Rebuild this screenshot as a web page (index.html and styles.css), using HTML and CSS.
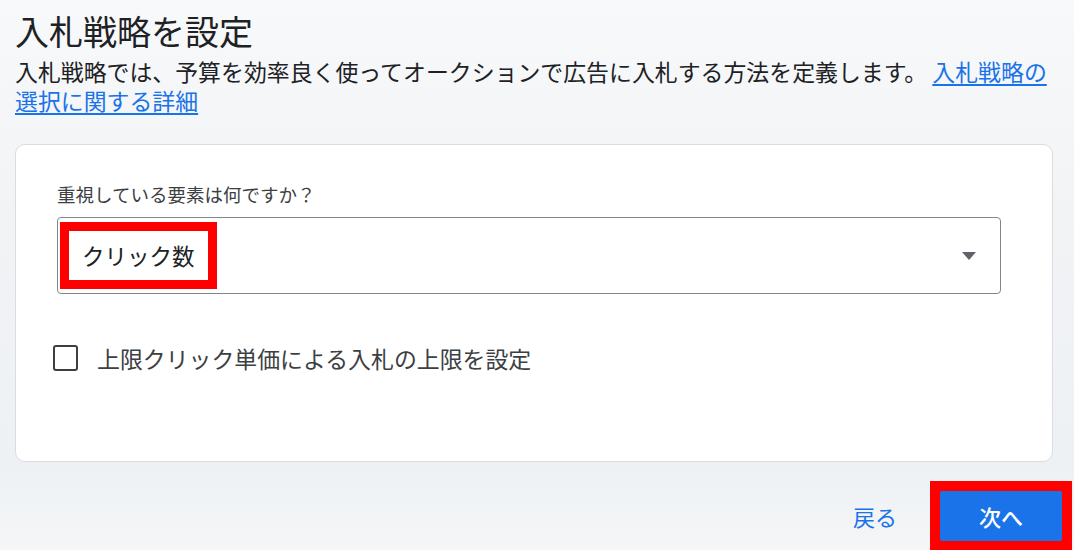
FILE: index.html
```html
<!DOCTYPE html>
<html lang="ja">
<head>
<meta charset="utf-8">
<title>入札戦略を設定</title>
<link rel="stylesheet" href="styles.css">
</head>
<body>
<main class="page">
  <h1 class="title">入札戦略を設定</h1>
  <p class="desc">入札戦略では、予算を効率良く使ってオークションで広告に入札する方法を定義します。 <a href="#" class="link">入札戦略の選択に関する詳細</a></p>

  <section class="card">
    <div class="label">重視している要素は何ですか？</div>
    <div class="select">
      <span class="value">クリック数</span>
      <span class="arrow"></span>
    </div>
    <label class="check-row">
      <span class="checkbox"></span>
      <span class="check-text">上限クリック単価による入札の上限を設定</span>
    </label>
  </section>

  <div class="footer">
    <button class="btn-back">戻る</button>
    <span class="red-frame"><button class="btn-next">次へ</button></span>
  </div>
</main>
</body>
</html>
```

FILE: styles.css
```css
html, body {
  margin: 0;
  padding: 0;
  height: 100%;
  overflow: hidden;
}
body {
  background: linear-gradient(180deg, #f8f9fa 0%, #f1f3f5 40%, #eef1f4 85%, #f4f6f7 100%);
  font-family: "Noto Sans CJK JP", "Noto Sans", sans-serif;
  color: #202124;
}
.page {
  padding: 10px 21px 0 15px;
}
.title {
  margin: 0;
  font-size: 34px;
  font-weight: 400;
  line-height: 42px;
  color: #202124;
}
.desc {
  margin: 5px 0 0;
  font-size: 22.9px;
  line-height: 29px;
  color: #202124;
}
.link {
  color: #1a73e8;
  text-decoration: underline;
  text-underline-offset: 3px;
}
.card {
  margin-top: 29px;
  background: #fff;
  border: 1px solid #dadce0;
  border-radius: 10px;
  padding: 37px 51px 89px 41px;
}
.label {
  font-size: 18.5px;
  line-height: 24px;
  color: #3c4043;
}
.select {
  margin-top: 11px;
  height: 77px;
  box-sizing: border-box;
  border: 1px solid #80868b;
  border-radius: 4px;
  display: flex;
  align-items: center;
  justify-content: space-between;
  padding: 0 24px 0 11px;
}
.value {
  display: inline-block;
  height: 49px;
  line-height: 49px;
  padding: 0 13px;
  font-size: 22.5px;
  color: #202124;
  outline: 9px solid #ff0000;
}
.arrow {
  width: 0;
  height: 0;
  border-left: 7.5px solid transparent;
  border-right: 7.5px solid transparent;
  border-top: 8px solid #5f6368;
}
.check-row {
  margin-top: 50px;
  margin-left: -4px;
  display: flex;
  align-items: center;
  gap: 19px;
  height: 28px;
}
.checkbox {
  width: 25px;
  height: 26px;
  box-sizing: border-box;
  border: 2.5px solid #3c4043;
  border-radius: 3px;
  flex-shrink: 0;
}
.check-text {
  font-size: 22.9px;
  line-height: 28px;
  color: #3c4043;
}
.footer {
  margin-top: 19px;
  margin-right: -19px;
  display: flex;
  justify-content: flex-end;
  align-items: center;
  gap: 13px;
}
.btn-back {
  background: none;
  border: 0;
  height: 50px;
  padding: 0 20px;
  font-family: inherit;
  font-size: 22px;
  color: #1a73e8;
}
.red-frame {
  display: inline-flex;
  padding: 10px;
  background: #ff0000;
}
.btn-next {
  width: 122px;
  height: 50px;
  border: 0;
  border-radius: 2px;
  background: #1a73e8;
  color: #fff;
  font-family: inherit;
  font-size: 22px;
  font-weight: 500;
}
```
